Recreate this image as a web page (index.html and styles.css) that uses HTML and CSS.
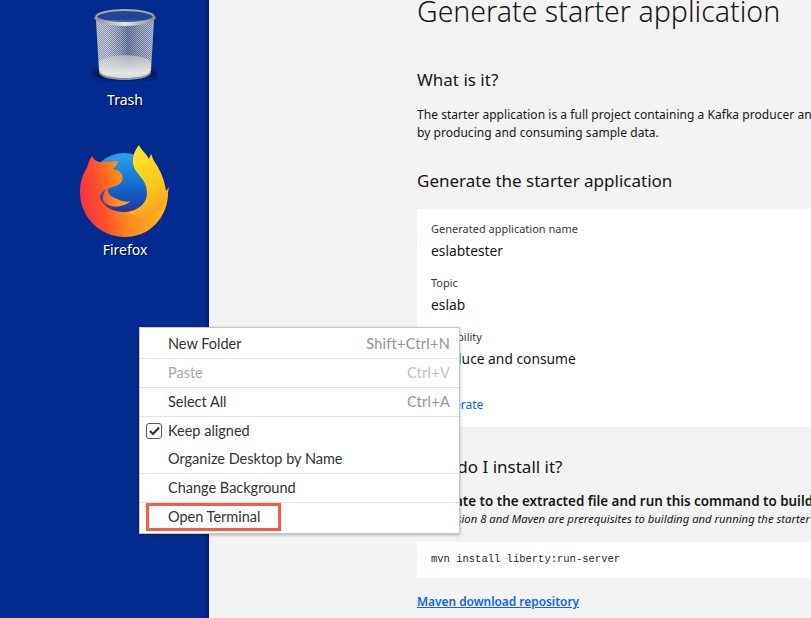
FILE: index.html
```html
<!DOCTYPE html>
<html lang="en">
<head>
    <meta charset="UTF-8">
    <title>Generate starter application</title>
    <link rel="stylesheet" href="styles.css">
</head>
<body>
    <div class="desktop">
        <div class="desktop-icon trash-icon">
            <svg width="66" height="76" viewBox="92 5 66 76">
                <defs>
                    <pattern id="mesh" width="2" height="2" patternUnits="userSpaceOnUse">
                        <rect width="2" height="2" fill="#56678f"/>
                        <rect width="1" height="1" fill="#bcc1cb"/>
                        <rect x="1" y="1" width="1" height="1" fill="#b2b8c4"/>
                    </pattern>
                    <linearGradient id="binShade" x1="0" x2="1" y1="0" y2="0">
                        <stop offset="0" stop-color="#dfe2e6" stop-opacity="0.4"/>
                        <stop offset="0.22" stop-color="#fff" stop-opacity="0.25"/>
                        <stop offset="0.55" stop-color="#2f4784" stop-opacity="0.35"/>
                        <stop offset="1" stop-color="#dfe2e6" stop-opacity="0.3"/>
                    </linearGradient>
                    <linearGradient id="binFloor" x1="0" x2="0" y1="0" y2="1">
                        <stop offset="0" stop-color="#c6c9c8" stop-opacity="0.7"/>
                        <stop offset="0.75" stop-color="#e6e7e5"/>
                        <stop offset="1" stop-color="#d4d6d4"/>
                    </linearGradient>
                    <linearGradient id="binRim" x1="0" x2="1" y1="0" y2="0">
                        <stop offset="0" stop-color="#8f9399"/>
                        <stop offset="0.5" stop-color="#e6e8ea"/>
                        <stop offset="1" stop-color="#8b8f95"/>
                    </linearGradient>
                    <filter id="binBlur"><feGaussianBlur stdDeviation="2.5"/></filter>
                </defs>
                <ellipse cx="125" cy="74" rx="33" ry="6" fill="#001450" filter="url(#binBlur)"/>
                <path d="M96 20 L99 70 C100 76 112 79 125 79 C138 79 150 76 151 70 L154 20 Z" fill="url(#mesh)"/>
                <path d="M96 20 L99 70 C100 76 112 79 125 79 C138 79 150 76 151 70 L154 20 Z" fill="url(#binShade)"/>
                <path d="M99 62 C104 53 146 53 151 62 L151 70 C150 76 138 79 125 79 C112 79 100 76 99 70 Z" fill="url(#binFloor)"/>
                <path d="M99 71 C101 76 113 78 125 78 C137 78 149 76 151 71 L151 73 C149 78 137 80 125 80 C113 80 101 78 99 73 Z" fill="#8e9296"/>
                <ellipse cx="125" cy="17" rx="29" ry="6.5" fill="#2f4f9c" opacity="0.7"/>
                <path d="M96 17 C96 13 110 10 125 10 C140 10 154 13 154 17" fill="none" stroke="#a7abb0" stroke-width="1.8"/>
                <path d="M96 17 C96 21 110 24 125 24 C140 24 154 21 154 17" fill="none" stroke="url(#binRim)" stroke-width="3.8"/>
            </svg>
            <span class="icon-label">Trash</span>
        </div>
        <div class="desktop-icon firefox-icon">
            <svg width="90" height="95" viewBox="80 143 90 95">
                <defs>
                    <linearGradient id="globe" x1="0" x2="0" y1="0" y2="1">
                        <stop offset="0" stop-color="#2aa5ec"/>
                        <stop offset="0.55" stop-color="#0d62c8"/>
                        <stop offset="1" stop-color="#331a88"/>
                    </linearGradient>
                    <linearGradient id="foxBody" x1="0" x2="1" y1="0.7" y2="0.5">
                        <stop offset="0" stop-color="#f0304a"/>
                        <stop offset="0.25" stop-color="#ff4f28"/>
                        <stop offset="0.5" stop-color="#ff8a1e"/>
                        <stop offset="1" stop-color="#ffc020"/>
                    </linearGradient>
                    <linearGradient id="foxHead" x1="0" x2="1" y1="0" y2="0">
                        <stop offset="0" stop-color="#ff5a28"/>
                        <stop offset="1" stop-color="#ffb820"/>
                    </linearGradient>
                    <linearGradient id="foxTail" x1="0.3" x2="0.6" y1="0" y2="1">
                        <stop offset="0" stop-color="#ffe727"/>
                        <stop offset="0.6" stop-color="#ffc81f"/>
                        <stop offset="1" stop-color="#ff9a1c"/>
                    </linearGradient>
                </defs>
                <circle cx="124" cy="187" r="35" fill="url(#globe)"/>
                <path d="M92 155 C89 159 88 163 87 167 C82 174 80 182 80 191 C80 216 100 236 125 236 C150 236 168 216 168 192 L148 190 C148 202 137 211 124 211 C113 211 104 206 100 197 C100 188 112 187 118 184 C124 181 124 174 119 170 L113 168 C116 165 118 162 118 160 C112 160 106 161 101 161 C97 161 94 159 92 155 Z" fill="url(#foxBody)"/>
                <path d="M108 187 C101 193 101 201 108 204 C114 207 124 206 131 200 C125 202 120 199 115 197 C110 195 107 192 108 187 Z" fill="url(#foxHead)"/>
                <path d="M139 144 C132 152 131 163 136 170 C142 178 147 182 147 192 C147 203 139 209 129 211 C140 222 160 214 167 197 L169 186 L166 190 C165 180 160 168 154 160 L151 153 L149 158 C146 152 141 149 139 144 Z" fill="url(#foxTail)"/>
            </svg>
            <span class="icon-label">Firefox</span>
        </div>
    </div>

    <div class="content">
        <h1>Generate starter application</h1>
        <h2 class="first-section">What is it?</h2>
        <p class="intro">The starter application is a full project containing a Kafka producer and consumer that you can run<br>by producing and consuming sample data.</p>
        <h2 class="generate-title">Generate the starter application</h2>
        <div class="panel">
            <div class="field-label">Generated application name</div>
            <div class="field-value">eslabtester</div>
            <div class="field-label">Topic</div>
            <div class="field-value">eslab</div>
            <div class="field-label">Capability</div>
            <div class="field-value">Produce and consume</div>
            <a class="generate-link" href="#">Generate</a>
        </div>
        <h2 class="install-title">How do I install it?</h2>
        <p class="step">Navigate to the extracted file and run this command to build and run the application</p>
        <p class="note">Java version 8 and Maven are prerequisites to building and running the starter application</p>
        <div class="code-box">mvn install liberty:run-server</div>
        <a class="maven-link" href="#">Maven download repository</a>
    </div>

    <div class="context-menu">
        <div class="menu-item"><span>New Folder</span><span class="shortcut">Shift+Ctrl+N</span></div>
        <div class="menu-item disabled"><span>Paste</span><span class="shortcut">Ctrl+V</span></div>
        <div class="menu-item"><span>Select All</span><span class="shortcut">Ctrl+A</span></div>
        <div class="menu-item no-line">
            <span class="check-box">
                <svg width="11" height="10" viewBox="0 0 11 10"><path d="M1 5 L4 8 L10 1.5" fill="none" stroke="#2e3436" stroke-width="2.2"/></svg>
            </span>
            <span>Keep aligned</span>
        </div>
        <div class="menu-item"><span>Organize Desktop by Name</span></div>
        <div class="menu-item"><span>Change Background</span></div>
        <div class="menu-item last"><span>Open Terminal</span><div class="highlight-box"></div></div>
    </div>
</body>
</html>
```

FILE: styles.css
```css
html, body {
    margin: 0;
    height: 100%;
}
body {
    display: flex;
    position: relative;
    overflow: hidden;
    background-color: #f3f3f3;
    font-family: "Noto Sans", sans-serif;
}
.desktop {
    width: 209px;
    height: 618px;
    flex-shrink: 0;
    box-sizing: border-box;
    padding-left: 75px;
    padding-top: 5px;
    background: linear-gradient(to right, #032a8e 98%, #02185c 100%);
}
.desktop-icon {
    width: 100px;
    display: flex;
    flex-direction: column;
    align-items: center;
}
.desktop-icon svg {
    display: block;
}
.firefox-icon {
    margin-top: 34px;
}
.icon-label {
    color: white;
    font-size: 14px;
    line-height: 20px;
    text-shadow: 1px 1px 1px rgba(0, 0, 0, 0.7);
}
.trash-icon .icon-label {
    margin-top: 9px;
}
.firefox-icon .icon-label {
    margin-top: 1px;
}

.content {
    flex: 1;
    min-width: 0;
    padding-left: 208px;
    white-space: nowrap;
    overflow: hidden;
    color: #161616;
    font-family: "Noto Sans", sans-serif;
}
h1 {
    margin: -7px 0 0;
    font-size: 28.5px;
    line-height: 36px;
    font-weight: 300;
}
h2 {
    margin: 0;
    font-size: 17px;
    line-height: 24px;
    font-weight: 400;
}
.first-section {
    margin-top: 39px;
}
.intro {
    margin: 14px 0 0;
    font-size: 12px;
    line-height: 18px;
    letter-spacing: 0.04px;
}
.generate-title {
    margin-top: 27px;
}
.panel {
    margin-top: 16px;
    height: 218px;
    box-sizing: border-box;
    padding: 12px 14px;
    background-color: white;
}
.field-label {
    font-size: 11px;
    line-height: 16px;
    color: #393939;
}
.field-value {
    font-size: 13.8px;
    line-height: 20px;
    margin-top: 4px;
    margin-bottom: 14px;
}
.generate-link {
    display: block;
    margin-top: 27px;
    font-size: 12px;
    line-height: 18px;
    color: #0f62fe;
    text-decoration: none;
}
.install-title {
    margin-top: 28px;
}
.step {
    margin: 12px 0 0;
    font-size: 13.4px;
    line-height: 20px;
    font-weight: 600;
}
.note {
    margin: 0;
    font-size: 11.3px;
    line-height: 15px;
    font-style: italic;
}
.code-box {
    margin-top: 16px;
    height: 36px;
    box-sizing: border-box;
    padding-left: 14px;
    background-color: white;
    font-family: "Liberation Mono", monospace;
    font-size: 10.5px;
    line-height: 34px;
    color: #262626;
}
.maven-link {
    display: block;
    margin-top: 14px;
    font-size: 11.9px;
    line-height: 18px;
    font-weight: 600;
    color: #0f62fe;
}

/* right click menu sits over the page */
.context-menu {
    position: absolute;
    left: 139px;
    top: 327px;
    width: 321px;
    box-sizing: border-box;
    padding-top: 2px;
    padding-bottom: 1px;
    background-color: white;
    border: 1px solid #c8c8c8;
    box-shadow: 0 1px 3px rgba(0, 0, 0, 0.3);
    color: #2e3436;
    font-family: "Lato", sans-serif;
    font-size: 14.5px;
}
.menu-item {
    position: relative;
    display: flex;
    justify-content: space-between;
    align-items: center;
    height: 29px;
    box-sizing: border-box;
    padding-left: 28px;
    padding-right: 9px;
    padding-bottom: 1px;
    border-bottom: 1px solid #e3e3e3;
}
.menu-item.no-line {
    justify-content: flex-start;
    border-bottom: 0;
    height: 28px;
}
.menu-item.last {
    border-bottom: 0;
    padding-bottom: 3px;
}
.menu-item.disabled {
    color: #a5a8a9;
}
.shortcut {
    color: #929595;
    letter-spacing: 0.25px;
}
.menu-item.disabled .shortcut {
    color: #c0c2c2;
}
.check-box {
    position: absolute;
    left: 6px;
    top: 6px;
    width: 16px;
    height: 16px;
    box-sizing: border-box;
    display: flex;
    align-items: center;
    justify-content: center;
    border: 1px solid #555a5c;
    border-radius: 3px;
}
.highlight-box {
    position: absolute;
    left: 6px;
    top: 0;
    width: 135px;
    height: 28px;
    box-sizing: border-box;
    border: 3px solid #fa5a4b;
}
```
